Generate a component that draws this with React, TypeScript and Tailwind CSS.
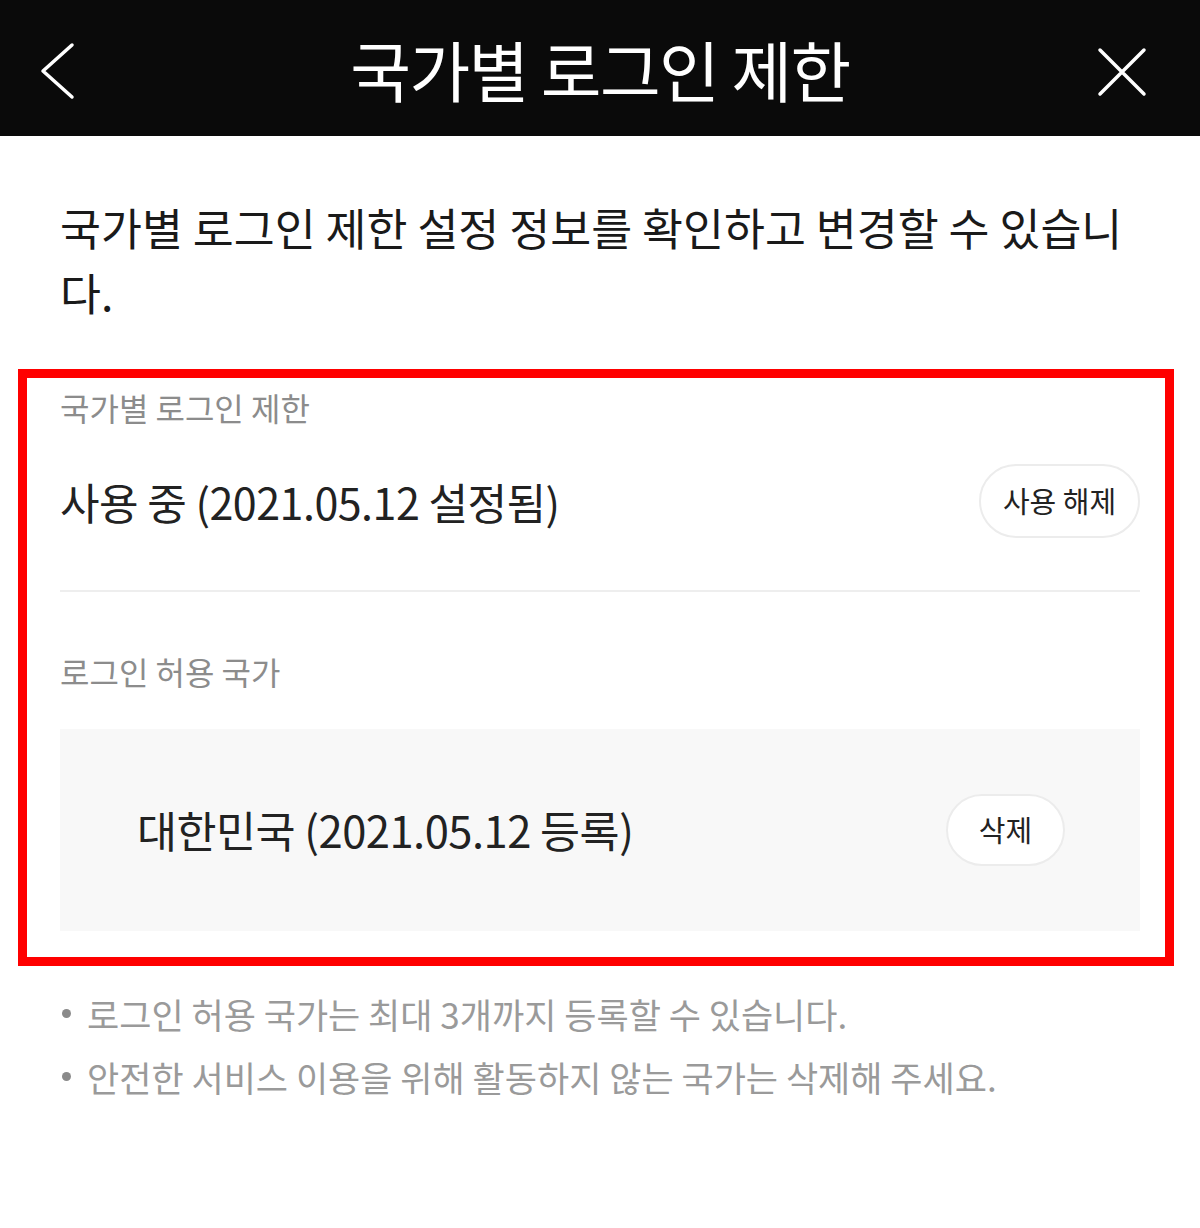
import React from "react";

const FONT = { fontFamily: '"Noto Sans CJK KR", "Noto Sans", sans-serif' };

export default function App() {
  return (
    <div className="w-[1200px] min-h-[1228px] bg-white" style={FONT}>
      {/* Header */}
      <div className="relative flex h-[136px] items-center justify-center bg-[#0a0a0a]">
        <button className="absolute left-[36px] top-[38px] flex h-[66px] w-[44px] items-center justify-center">
          <svg width="44" height="66" viewBox="0 0 44 66" fill="none">
            <path d="M36 7 L7 33 L36 59" stroke="#ffffff" strokeWidth="3.5" strokeLinecap="round" strokeLinejoin="round" />
          </svg>
        </button>
        <h1 className="text-[66px] leading-none font-normal text-white tracking-[-1.6px]">국가별 로그인 제한</h1>
        <button className="absolute left-[1094px] top-[44px] flex h-[56px] w-[56px] items-center justify-center">
          <svg width="56" height="56" viewBox="0 0 56 56" fill="none">
            <path d="M6 6 L50 50 M50 6 L6 50" stroke="#ffffff" strokeWidth="3.5" strokeLinecap="round" />
          </svg>
        </button>
      </div>

      {/* Description */}
      <p className="px-[60px] pt-[58px] text-[44.5px] leading-[65px] text-[#1a1a1a] whitespace-nowrap">
        국가별 로그인 제한 설정 정보를 확인하고 변경할 수 있습니
        <br />
        다.
      </p>

      {/* Red highlighted section */}
      <div className="mt-[45px] ml-[18px] mr-[26px] border-[9px] border-[#ff0000] pl-[33px] pr-[25px] pt-[7px] pb-[26px]">
        <div className="text-[32px] leading-[44px] text-[#8c8c8c]">국가별 로그인 제한</div>
        <div className="mt-[35px] flex h-[74px] items-center justify-between">
          <span className="text-[43px] leading-none text-[#222222] tracking-[-0.5px]">사용 중 (2021.05.12 설정됨)</span>
          <button className="flex h-[74px] w-[161px] items-center justify-center rounded-full border-2 border-[#ececec] bg-white text-[29px] text-[#222222]">
            사용 해제
          </button>
        </div>
        <div className="mt-[52px] h-[2px] bg-[#eeeeee]" />
        <div className="mt-[57px] text-[32px] leading-[44px] text-[#8c8c8c]">로그인 허용 국가</div>
        <div className="mt-[36px] flex h-[202px] items-center justify-between bg-[#f8f8f8] pl-[77px] pr-[75px]">
          <span className="text-[43.5px] leading-none text-[#222222] tracking-[-0.5px]">대한민국 (2021.05.12 등록)</span>
          <button className="flex h-[72px] w-[119px] items-center justify-center rounded-full border-2 border-[#ececec] bg-white text-[29px] text-[#222222]">
            삭제
          </button>
        </div>
      </div>

      {/* Notes */}
      <ul className="mt-[16px] px-[60px] text-[35px] leading-[63px] text-[#9a9a9a]">
        <li className="flex items-center">
          <span className="mr-[16px] ml-[2px] h-[9px] w-[9px] shrink-0 rounded-full bg-[#8a8a8a]" />
          로그인 허용 국가는 최대 3개까지 등록할 수 있습니다.
        </li>
        <li className="flex items-center">
          <span className="mr-[16px] ml-[2px] h-[9px] w-[9px] shrink-0 rounded-full bg-[#8a8a8a]" />
          안전한 서비스 이용을 위해 활동하지 않는 국가는 삭제해 주세요.
        </li>
      </ul>
    </div>
  );
}
